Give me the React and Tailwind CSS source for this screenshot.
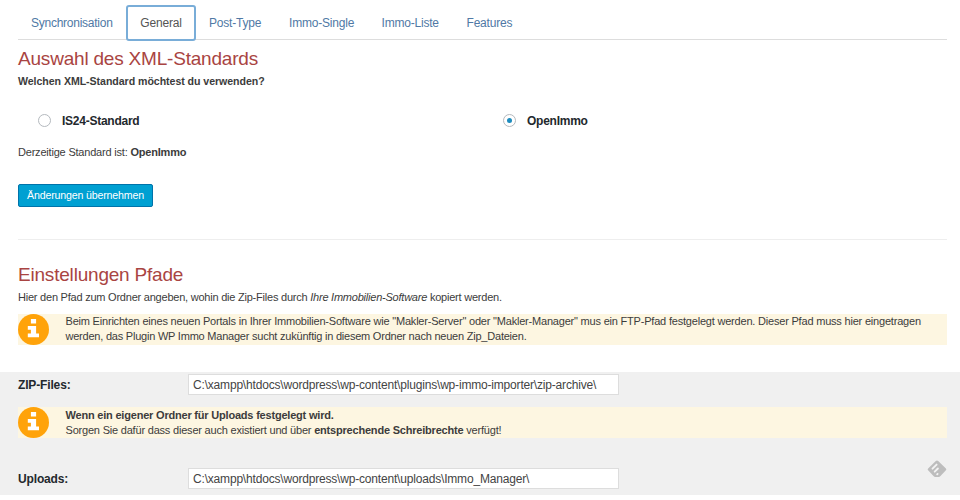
const tabs = [
  { label: "Post-Type", cls: "w-[80px]" },
  { label: "Immo-Single", cls: "w-[92.5px]" },
  { label: "Immo-Liste", cls: "w-[85px]" },
  { label: "Features", cls: "w-[73px]" },
];

function InfoIcon() {
  return (
    <svg viewBox="0 0 31 31" className="h-[31px] w-[31px] shrink-0">
      <circle cx="15.5" cy="15.5" r="15.5" fill="#ffa30a" />
      <path
        fill="#fff"
        d="M12.900 5h5.200v4.400h-5.200zM9.800 12h8.300v7.500H21v3.700H9.800v-3.700h3.100v-3.800H9.800z"
      />
    </svg>
  );
}

function Notice({ children, textCls }) {
  return (
    <div className="ml-[18px] flex h-[31px] w-[929px] bg-[#fdf6e1]">
      <InfoIcon />
      <div className={"ml-[16.5px] leading-[15px] whitespace-nowrap " + textCls}>{children}</div>
    </div>
  );
}

function PathField({ label, value }) {
  return (
    <div className="flex h-[21px] items-center pl-[18px]">
      <div className="w-[170px] text-[12px] font-bold tracking-[-0.15px] text-[#23282d]">
        <span>{label}</span>
      </div>
      <div className="flex h-[21px] w-[431px] items-center border border-[#dddddd] bg-white pl-[4px] text-[12px] tracking-[-0.185px] text-[#444]">
        <span>{value}</span>
      </div>
    </div>
  );
}

export default function App() {
  return (
    <div className="flex h-[500px] w-[960px] flex-col overflow-hidden bg-white font-['Liberation_Sans',Arial,sans-serif] text-[11px] tracking-[-0.2px] whitespace-nowrap text-[#3c3c3c]">
      <nav className="ml-[18px] flex h-[40px] w-[929px] border-b border-[#dddddd] pt-[5px] text-[12px] text-[#5079a5]">
        <div className="flex h-[35px] w-[108px] items-center pl-[13px] tracking-[-0.25px]">
          <span>Synchronisation</span>
        </div>
        <div className="mr-[1px] flex h-[36px] w-[70px] shrink-0 items-center justify-center rounded-[3px] border-2 border-[#79add8] bg-white text-[#555]">
          <span>General</span>
        </div>
        <div className="ml-[12px] flex h-[35px] items-center">
          {tabs.map((t) => (
            <div key={t.label} className={t.cls}>
              <span>{t.label}</span>
            </div>
          ))}
        </div>
      </nav>

      <section className="ml-[18px] flex h-[200px] w-[929px] flex-col border-b border-[#eeeeee]">
        <h2 className="mt-[6px] h-[25px] text-[19px] leading-[25px] tracking-[-0.2px] text-[#a94442]">
          <span>Auswahl des XML-Standards</span>
        </h2>
        <p className="mt-[3px] h-[15px] text-[10.6px] leading-[15px] font-bold tracking-[-0.05px]">
          <span>Welchen XML-Standard möchtest du verwenden?</span>
        </p>
        <div className="mt-[24px] flex h-[15px] items-center text-[12px] font-bold tracking-[-0.25px] text-[#23282d]">
          <div className="flex w-[465px] items-center pl-[20px]">
            <span className="h-[13px] w-[13px] rounded-full border border-[#b4b9be] bg-white" />
            <span className="ml-[11px]">IS24-Standard</span>
          </div>
          <div className="flex items-center pl-[20px]">
            <span className="flex h-[13px] w-[13px] items-center justify-center rounded-full border border-[#b4b9be] bg-white">
              <span className="h-[5px] w-[5px] rounded-full bg-[#1e8cbe]" />
            </span>
            <span className="ml-[11px]">OpenImmo</span>
          </div>
        </div>
        <p className="mt-[17px] h-[15px] leading-[15px]">
          <span>
            Derzeitige Standard ist: <b>OpenImmo</b>
          </span>
        </p>
        <button className="mt-[24px] flex h-[23px] w-[135px] shrink-0 items-center justify-center rounded-[2px] border border-[#0073aa] bg-[#00a0d2] text-[10.6px] tracking-[-0.16px] text-white">
          <span>Änderungen übernehmen</span>
        </button>
      </section>

      <section className="h-[132px]">
        <h2 className="ml-[18px] h-[25px] pt-[22px] text-[19px] leading-[25px] tracking-[-0.2px] text-[#a94442]">
          <span>Einstellungen Pfade</span>
        </h2>
        <p className="mt-[25px] ml-[18px] h-[15px] leading-[15px] tracking-[-0.225px]">
          <span>
            Hier den Pfad zum Ordner angeben, wohin die Zip-Files durch <i>Ihre Immobilien-Software</i> kopiert werden.
          </span>
        </p>
        <div className="mt-[9px]">
          <Notice textCls="">
            <div>
              <span>
                Beim Einrichten eines neuen Portals in Ihrer Immobilien-Software wie "Makler-Server" oder "Makler-Manager" mus ein FTP-Pfad festgelegt werden. Dieser Pfad muss hier eingetragen
              </span>
            </div>
            <div className="tracking-[-0.22px]">
              <span>werden, das Plugin WP Immo Manager sucht zukünftig in diesem Ordner nach neuen Zip_Dateien.</span>
            </div>
          </Notice>
        </div>
      </section>

      <section className="h-[123px] bg-[#f0f0f0]">
        <div className="h-[35px] pt-[2px]">
          <PathField label="ZIP-Files:" value="C:\xampp\htdocs\wordpress\wp-content\plugins\wp-immo-importer\zip-archive\" />
        </div>
        <Notice textCls="pt-[1px]">
          <div className="font-bold">
            <span>Wenn ein eigener Ordner für Uploads festgelegt wird.</span>
          </div>
          <div>
            <span>
              Sorgen Sie dafür dass dieser auch existiert und über <b>entsprechende Schreibrechte</b> verfügt!
            </span>
          </div>
        </Notice>
        <div className="flex justify-between pt-[21px]">
          <div className="pt-[9px]">
            <PathField label="Uploads:" value="C:\xampp\htdocs\wordpress\wp-content\uploads\Immo_Manager\" />
          </div>
          <svg viewBox="0 0 20 20" className="mr-[13px] h-[20px] w-[20px]">
            <path d="M8.800 2q1.200-1 2.400 0l7.700 7.400q.9.900 0 1.800L13.500 17q-.8.900-1.800.9H8.300q-1 0-1.800-.9L1.100 11.200q-.9-.9 0-1.800z" fill="#bdbdbd" />
            <path d="M5.500 9.700 9.600 5.600M7.700 12.700l3.200-3.200M10.200 15.300l.4-.4" stroke="#f3f3f3" strokeWidth="1.900" strokeLinecap="round" />
          </svg>
        </div>
      </section>
    </div>
  );
}
